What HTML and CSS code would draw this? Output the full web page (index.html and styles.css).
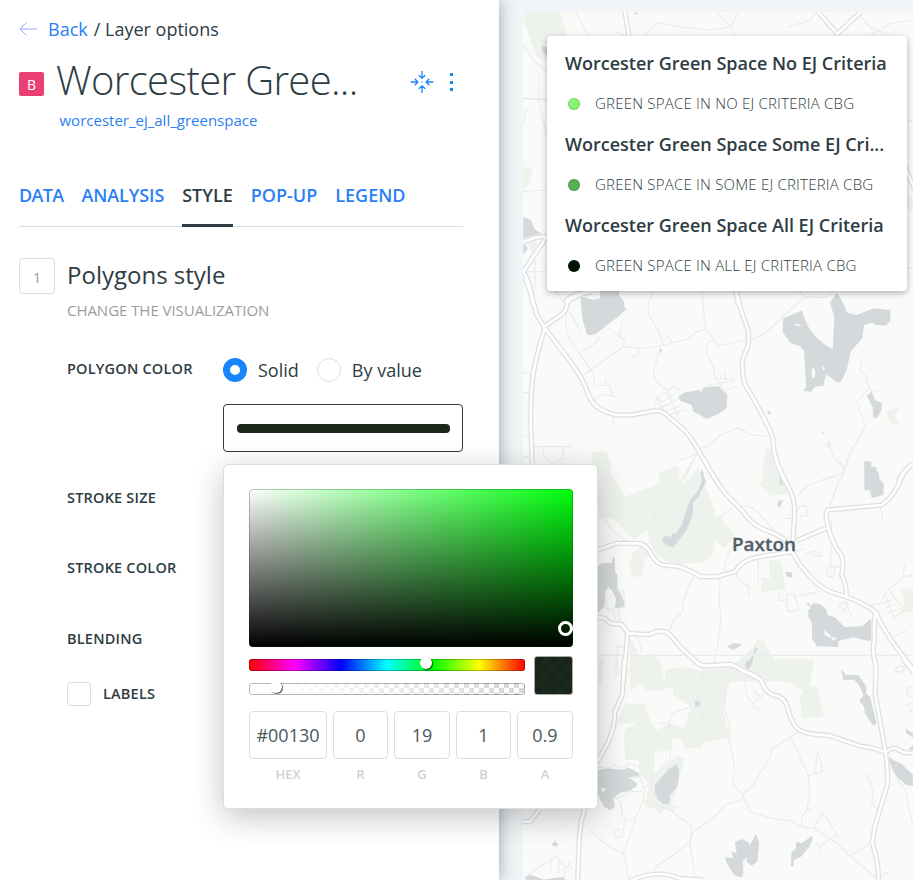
FILE: index.html
```html
<!DOCTYPE html>
<html lang="en">
<head>
<meta charset="utf-8">
<title>Layer options</title>
<link rel="stylesheet" href="styles.css">
</head>
<body>
<div class="app">
  <aside class="panel">
    <div class="crumbs">
      <svg class="back-icon" width="18" height="14" viewBox="0 0 18 14"><path d="M7.5 0.5 L1 7 L7.5 13.5 M1 7 H18"/></svg>
      <a class="link">Back</a><span class="crumb-rest">/ Layer options</span>
    </div>
    <header class="title-row">
      <span class="layer-letter">B</span>
      <h1 class="title">Worcester Gree...</h1>
      <svg class="center-icon" width="24" height="24" viewBox="0 0 24 24">
        <path d="M12 1v7M8.8 5.2L12 8.2l3.200-3M12 23v-7M8.800 18.800L12 15.800l3.200 3M.7 12h7M4.800 8.800L7.800 12l-3 3.200M23.300 12h-7M19.200 8.800L16.200 12l3 3.200"/><rect x="11.400" y="11.400" width="1.200" height="1.200"/>
      </svg>
      <span class="dots"><i></i><i></i><i></i></span>
    </header>
    <a class="source link">worcester_ej_all_greenspace</a>
    <nav class="tabs">
      <a class="tab-data">DATA</a><a class="tab-analysis">ANALYSIS</a><a class="active">STYLE</a><a>POP-UP</a><a>LEGEND</a>
    </nav>
    <section class="section">
      <span class="step">1</span>
      <div class="section-head">
        <h2>Polygons style</h2>
        <p>CHANGE THE VISUALIZATION</p>
      </div>
    </section>
    <div class="form">
      <div class="row row-color">
        <span class="label">POLYGON COLOR</span>
        <div class="control">
          <div class="radios">
            <span class="radio on"></span><span class="radio-text first">Solid</span>
            <span class="radio"></span><span class="radio-text">By value</span>
          </div>
          <div class="color-field">
            <div class="color-bar"></div>
            <div class="picker">
              <div class="shade"><span class="ring"></span></div>
              <div class="sliders">
                <div class="bars">
                  <div class="bar hue"><span class="knob hue-knob"></span></div>
                  <div class="bar alpha"><span class="knob alpha-knob"></span></div>
                </div>
                <div class="swatch"></div>
              </div>
              <div class="values">
                <div><span class="value">#00130</span><small>HEX</small></div>
                <div><span class="value">0</span><small>R</small></div>
                <div><span class="value">19</span><small>G</small></div>
                <div><span class="value">1</span><small>B</small></div>
                <div><span class="value">0.9</span><small>A</small></div>
              </div>
            </div>
          </div>
        </div>
      </div>
      <div class="row row-size"><span class="label">STROKE SIZE</span></div>
      <div class="row row-stroke"><span class="label">STROKE COLOR</span></div>
      <div class="row row-blend"><span class="label">BLENDING</span></div>
      <div class="row row-labels"><span class="check"></span><span class="label">LABELS</span></div>
    </div>
  </aside>
  <main class="stage">
    <div class="map">
      <svg class="map-art" width="390" height="868" viewBox="523 12 390 868">
        <defs>
          <g id="roads" fill="none" stroke-linejoin="round">
            <g transform="translate(500 0) scale(.33333)">
              <path d="M375 36L388 115M955 36L1012 102L1082 36M1012 102V180M140 710L70 815M70 725L110 712L140 710M70 815Q94 850 98 915M200 910Q220 885 275 876M706 870L715 915M1215 500L1245 570"/>
            </g>
            <g transform="translate(500 280) scale(.33333)">
              <path d="M75-5Q95 40 110 105L135 145L215 250Q250 300 260 330Q270 362 290 380Q320 400 350 405H395L460 393Q485 390 500 405L555 452Q585 490 600 520L655 612"/>
              <path d="M135 145Q115 200 100 280Q91 340 92 430L97 555M135 138L190 100Q205 80 198 65Q205 45 275 33"/>
              <path d="M706 25Q715 55 722 85Q730 115 743 145Q749 175 742 205Q722 240 728 270Q728 305 745 330Q770 370 795 422Q820 465 820 490Q820 530 850 595L860 612M1195 605Q1212 565 1245 548"/>
            </g>
            <g transform="translate(590 460) scale(.33333)">
              <path d="M340-5Q370 55 410 105L455 150Q485 195 530 212Q590 230 604 270Q622 310 670 360Q700 390 735 400Q820 425 858 458Q885 525 972 630"/>
              <path d="M555-5Q580 50 595 80Q615 115 614 165L608 245M620 242L715 202L708 170L712 150L875 135Q905 115 925 75Q940 30 970 10M715 202Q725 245 750 280Q765 300 755 345Q770 375 769 408"/>
              <path d="M20 270L80 250H140Q170 250 185 285Q200 312 220 315L270 320Q310 335 330 350H380L435 335Q455 300 500 292L605 275M20 470L45 475L60 490L95 493L115 520L175 524Q225 500 245 530L270 560L325 612L345 618L415 613Q440 617 455 630L515 660M113 520L100 665M857 458Q850 490 853 540Q844 570 858 620V665"/>
            </g>
            <g transform="translate(590 660) scale(.33333)">
              <path d="M310-3Q325 15 345 17L425 14Q445 20 460 33Q510 45 520 75Q530 100 555 106Q585 110 593 145Q605 190 625 208Q645 220 675 223L720 227L810 258Q850 262 888 278Q900 264 915 264L940 277L972 280M103-3L97 105L75 155Q75 200 55 245L20 310M855-3Q860 40 855 100L887 278Q895 350 892 375L865 465Q850 510 847 550Q865 600 866 665M118 664Q165 642 205 642Q240 642 265 655L340 660M940-3L972 38"/>
            </g>
            <g transform="translate(490 780) scale(.33333)"><path d="M98 125H120L150 87M282 87Q283 98 274 120L268 175L263 300"/></g>
          </g>
        </defs>
        <rect class="land" x="523" y="12" width="390" height="868"/>
        <g class="park">
          <path transform="translate(500 0) scale(.33333)" d="M75 36H180L203 110H150V185L112 175L70 60ZM70 500L98 505L85 555L70 572ZM85 725L105 715L115 745L95 770ZM1220 590H1245V640L1220 625Z"/>
          <path transform="translate(500 280) scale(.33333)" d="M275 515L320 513L332 555L328 615H275ZM475 578L528 558L545 612H485ZM800 497L820 505V560L835 600H787L790 545ZM1160 395L1193 380L1197 392L1183 405L1198 438L1172 428Z"/>
          <path transform="translate(590 460) scale(.33333)" d="M20 0L60 15L65 45L105 110L210 70L208 40L265 20L272 80L260 98L180 165L185 202L133 240L70 175L20 170ZM185 155Q260 110 325 20L345 75L375 155Q370 180 385 165L438 230L400 265L378 240L365 285L335 308L255 312L200 290L175 230L180 190ZM528 0H555L595 75V103L542 108L503 65L538 55L515 15ZM130 275L170 250L182 280L162 305L155 355L125 345L118 310ZM538 300L572 305L588 388L515 395V350L540 355ZM935 390L972 380V453L925 463L945 430ZM120 543L132 545L145 590L195 578L215 665H120ZM225 630L275 622L285 640L305 637V665H228ZM370 625L425 620L490 560L500 540L520 543L550 590L565 610L672 603L655 665H370ZM20 592L42 595L35 665H20Z"/>
          <path transform="translate(590 660) scale(.33333)" d="M122-2L210-2L223 60L290 20L340 35L365 15L425 20L400 150L418 235L335 248V262L283 268L275 238L242 230V272L193 275V345L225 320L262 288L285 295L245 435L268 440L250 453L220 448L210 465L195 445L165 442L178 370L150 345L145 300H106L103 235L105 210L138 190H80L105 130L165 132L175 170L200 210L240 190L280 205L305 140L250 105L250 78L220 90L175 95L150 70L122 95ZM495-2H672L660 80L682 80L702 170L635 175L630 110L640 90L610 80L595 50L570 35L535 45L510 20ZM20-2H38L33 75L20 80ZM950 155L970 140V158Z"/>
        </g>
        <g class="water">
          <path transform="translate(500 0) scale(.33333)" d="M123 138L143 142V170L130 160ZM70 650L92 660L105 690L125 700L112 715L70 720ZM70 730L84 745L75 760L70 762ZM404 38H414V43H405Z"/>
          <path transform="translate(500 280) scale(.33333)" d="M240 45Q275 65 300 55V30H357V45L372 65L373 80L379 87L355 110L330 128L290 160Q270 170 260 162L248 120ZM534 350L552 338L595 330L602 336L615 322L655 318L682 345L680 385L655 402L620 417L600 405L580 395L575 375L540 362ZM850 115L905 92L922 135Q945 180 998 208L1003 110L990 68L1010 38L1025 60L1042 98L1070 105L1120 85L1170 90L1172 120L1158 137L1130 135L1115 128L1092 135L1087 175L1052 215L1040 270L1022 307H1010L978 282L970 317L945 320L933 335L910 333L918 318L912 212L898 198L870 188L848 155ZM1100 348L1115 334L1125 360L1145 368V390L1132 413H1120L1118 380ZM1093 543L1113 545L1112 560L1128 562L1140 602H1095ZM804 392L813 396L811 404L802 401ZM602 575L608 568L614 602H607ZM965 457H972L970 463ZM478 204L486 208L482 221L477 212Z"/>
          <path transform="translate(590 460) scale(.33333)" d="M335 30L348 65L325 110L308 130L310 160L290 210L260 250L250 263L225 255L215 240L222 228L245 230V220L258 220L275 195L300 120L325 90L335 65ZM823 5H843L845 28L867 38L865 55L882 72L880 105L845 115L840 92L823 90ZM565 122L579 120L570 142L561 139ZM20 322L35 310L65 308L70 288L75 300V335L82 345L83 385L103 425V443L75 445L78 415L65 390L55 380L46 395L43 440L20 463ZM588 335L605 337L608 352L596 352L588 345ZM648 428L660 430L658 440L670 430L690 432L710 450L712 465L735 472L765 502L785 500L818 498L840 478L850 495V540L835 543L790 532L755 540L745 545V562L680 558L666 535V490L655 470V450L663 445ZM410 560L430 550L458 552L430 570ZM495 560L504 568L490 585L488 605L470 628L465 625L478 605L490 580ZM755 628L770 650L800 648L812 658L760 660ZM568 52L576 56V75L570 76Z"/>
          <path transform="translate(590 660) scale(.33333)" d="M20 330L55 325L100 330L113 322L148 340V347L115 352L140 370V378L120 392L90 398L70 415L75 440L60 450L42 440L20 395ZM262 312L268 335L263 380L240 405L238 433L220 432L205 420L195 400V375L235 328ZM498 522L508 548L502 605L485 617L470 605V592L458 605L460 638L455 653L432 645L408 605L405 592L430 595L425 575L440 580L435 545L455 537L475 545L480 555ZM605 575L618 568V545L635 550L665 528L668 535L660 557L633 590L612 600L610 620L602 618ZM753 27L765 45H805L830 80L828 100L840 110L860 190L850 197L825 162L822 140L808 122L820 105L805 72L790 58L762 57ZM470 3L490-3L483 18L477 28L465 15ZM315 124L330 121L333 138L315 140ZM892 285L912 302L935 312L970 345V378L950 375L920 350L900 310ZM945 205L970 220V235L950 220ZM955 268L970 255V272Z"/>
          <path transform="translate(490 780) scale(.33333)" d="M194 178L199 188L204 192V197L189 199L185 190H193ZM108 300L105 291L115 284L135 289L160 299L220 290L226 300Z"/>
        </g>
        <g class="land">
          <path transform="translate(500 280) scale(.33333)" d="M883 130L908 137L890 139ZM936 265Q948 260 945 290Q938 303 935 285ZM966 258L975 265L970 273Z"/>
          <path transform="translate(590 460) scale(.33333)" d="M700 510L722 525L722 535L705 525ZM722 532L740 533L730 543Z"/>
          <circle cx="603.300" cy="789.700" r="2"/>
        </g>
        <g class="minor">
          <path transform="translate(500 0) scale(.33333)" d="M228 36L265 110M385 115L350 95M430 110L470 68L550 82L625 90L670 85L692 80L715 36M692 80L705 110M650 36L692 80M865 80L930 62L950 36M1080 50L1115 85L1170 105M1110 105L1170 72L1235 60M70 135L100 180L140 215M120 215Q105 280 140 405M70 575L140 570M70 815H140M105 715V870M1220 805H1240M70 370L80 325"/>
          <path transform="translate(500 280) scale(.33333)" d="M165 30L198 80V145L210 180L280 280L284 318L330 315L335 345M198 95H208L240 152M240 215L270 200L295 182V168M250 285L370 200L374 180L358 165L367 128M325 145L374 182M370 200Q440 210 490 195L565 177Q590 150 617 147L655 197L740 180L780 170L840 120L860 98L915 50L975 53L1000 35M460 35Q435 80 450 110Q480 155 490 195M605 35L612 105L617 145M640 180Q605 195 625 235Q645 255 640 280L670 330M480 200L460 280Q465 310 500 328L538 420M418 205L412 225L390 237M462 382L470 355L520 320L535 325L537 360M470 375L520 345M480 385L530 360M495 395L545 375M505 405L558 387M465 360H485M470 345L490 388M595 330L630 315L710 300M655 297H705M675 330L715 318M660 285L664 298M672 272L678 298M690 280L694 300M282 360L310 342L348 350M315 298L318 315M340 410V438M70 280L100 277M70 338H90M70 468H95M103 500H215M130 500Q125 530 155 550L190 535V502M70 530H95M605 502H620L645 480Q660 465 685 455L715 443L755 465L805 468M535 542L590 523L550 602M1085 240L1080 270L1100 292L1107 325L1070 365L1097 440L1048 522L1025 602M1107 328L1133 336M985 485L993 492L985 502Q975 490 985 485L1000 530L1033 568M960 602L1030 580M895 30L915 50M500 165L518 188"/>
          <path transform="translate(590 460) scale(.33333)" d="M310 0L275 60V100L205 150Q175 175 178 220L180 245L160 255M215 240L270 310M245 285L340 235Q375 210 378 180L430 142Q475 125 510 165L565 225M625 105L655 75L755 42L715 150M745 0L765 20L755 42M870 140L880 188M610 175H585M620 155L630 140L648 137L653 165L630 170M430 260Q400 290 405 335M438 335Q440 370 475 375L478 410M505 292V370M390 350L388 430L393 470L385 550Q375 580 373 610M310 350L280 420L278 455L250 480L240 510M565 395L570 422L595 418M590 405L610 400L628 450L595 455L588 410L595 405M610 410L690 395M712 318V350H730L735 320H715M735 315L750 322M670 275Q695 275 690 290L670 285V272L645 285M615 275L645 265M745 435L770 425L765 455L745 435M768 425L785 472M820 440L870 430L885 400L940 350L970 345M885 405L915 480M900 395L935 440M875 430L910 418M885 445L920 430M895 458L930 445M910 470L935 460M905 535L948 512M20 170L40 175L75 220L110 243M80 395L100 390L105 440L85 445L90 490M50 400L48 445L70 450L75 490M100 560H82V635H120M135 525L150 550L155 580M20 586H972M345 615L330 665M915 630Q930 610 945 625Q935 645 915 630M0 50L40 160M945 315L940 345M725 180L722 330"/>
          <path transform="translate(590 660) scale(.33333)" d="M345 25L310 110Q310 130 300 142L245 160Q238 165 237 225L245 240L240 300L180 360L165 385L160 420L135 480H110L95 465Q95 410 75 415M320 100L343 180L340 193L290 200L247 225M205 190H237M425 20L405 115V150L418 190V240L435 325L427 370L457 405L480 455L545 475L600 482L635 500L672 505L735 545L780 588L860 655M457 405L495 370L510 340L542 290V270L600 230L625 217M600 230L655 345L660 400L650 450L635 470V500M655 348L695 335V315L683 275L675 340M455 420L405 435L370 475L310 515L300 545L250 585L195 620V640M160 420L240 450L300 495L305 515L300 550L315 650M0 510L55 560L100 580L137 480M100 580L118 660M105 480L95 530L75 532Q65 510 90 508M20 320L50 325L75 315L95 325L118 310L150 322M115 355L150 350L160 385M70 420L120 395H160M180 370L200 340M468 50Q460 115 490 130L525 100M490 90L510 110M490 135L510 152M672 505L700 450M690 460L710 470L748 540M690 570L695 555L738 525M675 550L690 555M780 588L845 550M828 340L850 390L845 430L865 455M900 320L945 390L970 500M915 30Q930 10 945 25Q930 45 915 30M970 80L950 85L955 110L970 115M950 140L970 125M78 0V45H95M650 445Q665 445 660 455M875 645L900 635M370 0V15"/>
          <path transform="translate(490 780) scale(.33333)" d="M108 290L180 240L200 230L220 255L250 265M205 235L208 280M185 240L180 280M240 240L235 260L220 265L226 290M0 90"/>
        </g>
        <use href="#roads" class="road-halo"/>
        <use href="#roads" class="road-edge"/>
        <use href="#roads" class="road-core"/>
        <path class="stream" d="M523 98.500L547 99.500M907 121H913"/>
        <text class="town" x="732" y="551" textLength="64" lengthAdjust="spacingAndGlyphs">Paxton</text>
      </svg>
      <div class="legend">
        <h3>Worcester Green Space No EJ Criteria</h3>
        <p><i class="dot light"></i>GREEN SPACE IN NO EJ CRITERIA CBG</p>
        <h3>Worcester Green Space Some EJ Cri...</h3>
        <p><i class="dot mid"></i>GREEN SPACE IN SOME EJ CRITERIA CBG</p>
        <h3>Worcester Green Space All EJ Criteria</h3>
        <p><i class="dot dark"></i>GREEN SPACE IN ALL EJ CRITERIA CBG</p>
      </div>
    </div>
  </main>
</div>
</body>
</html>
```
FILE: styles.css
```css
* { box-sizing: border-box; }
body {
  margin: 0;
  overflow: hidden;
  font-family: "Open Sans", sans-serif;
  color: #2e3c43;
}
h1, h2, h3, p { margin: 0; font-weight: 400; white-space: nowrap; }
.app { display: flex; width: 913px; height: 880px; }
.link { color: #2b7ff5; }

/* Editor panel */
.panel {
  position: relative;
  z-index: 2;
  flex: none;
  width: 499px;
  padding: 0 36px 0 19px;
  background: #fff;
  box-shadow: 0 0 16px rgba(0, 0, 0, .34);
}
.crumbs { display: flex; align-items: center; height: 58px; font-size: 18px; white-space: nowrap; }
.back-icon { margin-right: 11px; fill: none; stroke: #8fa8ff; stroke-width: 1; }
.crumb-rest { margin-left: 6px; }
.title-row { display: flex; align-items: center; height: 48px; }
.layer-letter {
  display: flex;
  align-items: center;
  justify-content: center;
  width: 25px;
  height: 24px;
  margin: 4px 12px 0 0;
  border-radius: 2px;
  background: #ea3f74;
  color: #fff;
  font-size: 14px;
}
.title { width: 354px; font-size: 40px; line-height: 48px; font-weight: 300; letter-spacing: -.65px; margin-top: -4px; }
.center-icon { flex: none; fill: #1785fb; margin-right: 16px; }
.center-icon path { fill: none; stroke: #1785fb; stroke-width: 1.300; }
.dots { display: flex; flex-direction: column; gap: 4.500px; }
.dots i { width: 3px; height: 3px; background: #1785fb; }
.source { display: block; height: 30px; margin-left: 40.500px; font-size: 15px; line-height: 29px; }
.tabs {
  display: flex;
  gap: 18px;
  height: 63px;
  margin-top: 28px;
  border-bottom: 1px solid #ddd;
  font-size: 18px;
  font-weight: 600;
  line-height: 62px;
  color: #2b7ff5;
  white-space: nowrap;
}
.tab-data { letter-spacing: -.7px; }
.tab-analysis { letter-spacing: -.1px; }
.tabs .active { height: 63px; border-bottom: 3px solid #2e3c43; color: #2e3c43; }
.section { display: flex; margin-top: 31px; }
.step {
  width: 36px;
  height: 36px;
  margin-right: 12px;
  border: 1px solid #ddd;
  border-radius: 4px;
  font-size: 15px;
  line-height: 36px;
  text-align: center;
  color: #979ea1;
}
.section-head h2 { font-size: 24px; line-height: 34px; }
.section-head p { margin-top: 8px; font-size: 15px; line-height: 20px; letter-spacing: -.04px; color: #979ea1; }

.form { margin: 38px 0 0 48px; }
.row { display: flex; align-items: center; }
.row-color { align-items: flex-start; }
.label { font-size: 14.500px; font-weight: 600; line-height: 20px; letter-spacing: .2px; width: 156px; white-space: nowrap; }
.row-color .label { margin-top: 1px; }
.radios { display: flex; align-items: center; height: 24px; font-size: 18px; white-space: nowrap; }
.radio { flex: none; width: 24px; height: 24px; border: 1px solid #ddd; border-radius: 50%; background: #fff; margin-right: 11px; }
.radio.on { border: 7.500px solid #1785fb; }
.radio-text.first { margin-right: 18px; }
.color-field {
  position: relative;
  display: flex;
  align-items: center;
  width: 240px;
  height: 48px;
  margin-top: 22px;
  padding: 0 12px 0 13px;
  border: 1px solid #2e3c43;
  border-radius: 4px;
}
.color-bar { width: 213px; height: 9px; border-radius: 4px; background: #1a291b; }
.row-size { margin-top: 36px; }
.row-stroke { margin-top: 50px; }
.row-blend { margin-top: 51px; }
.row-labels { margin-top: 33px; }
.row-labels .label { margin-top: -1px; }
.check { width: 24px; height: 24px; margin-right: 12px; border: 1px solid #ddd; border-radius: 3px; }

/* Colour picker popover */
.picker {
  position: absolute;
  top: 59px;
  left: -1px;
  width: 375px;
  height: 345px;
  padding: 24px 24px 0 25px;
  border: 1px solid #ddd;
  border-radius: 5px;
  background: #fff;
  box-shadow: 0 8px 32px rgba(0, 0, 0, .24);
}
.shade {
  position: relative;
  width: 324px;
  height: 158px;
  border-radius: 4px;
  background: linear-gradient(to top, #000, transparent), linear-gradient(to right, #fff, #00ff0d);
  box-shadow: inset 0 0 0 1px rgba(0, 60, 8, .28);
}
.ring {
  position: absolute;
  left: 309px;
  top: 132px;
  width: 15px;
  height: 15px;
  border: 3px solid #fff;
  border-radius: 50%;
}
.sliders { display: flex; justify-content: space-between; height: 39px; margin-top: 9px; }
.bars { padding-top: 3px; width: 276px; }
.bar { position: relative; height: 12px; border-radius: 3px; box-shadow: inset 0 0 0 1px rgba(0, 0, 0, .28); }
.hue { background: linear-gradient(to right, #f00, #f0f 16.670%, #00f 33.330%, #0ff 50%, #0f0 66.670%, #ff0 83.330%, #f00); }
.alpha {
  margin-top: 12px;
  background:
    linear-gradient(to right, #fff 10%, rgba(255, 255, 255, 0)),
    repeating-conic-gradient(#d6d6d6 0 25%, #fff 0 50%) 0 0 / 10px 10px;
}
.knob {
  position: absolute;
  width: 12px;
  height: 12px;
  border-radius: 50%;
  background: #fff;
  box-shadow: 1px 1px 1px rgba(0, 0, 0, .65);
}
.hue-knob { left: 171px; top: -2px; }
.alpha-knob { left: 21px; top: -2px; }
.swatch { width: 39px; border: 1px solid #aaa; border-radius: 3px; background: repeating-conic-gradient(#1a291b 0 25%, #17251a 0 50%) 0 0 / 15px 15px; }
.values { display: grid; grid-template-columns: 78px 55px 56px 55px 56px; gap: 6px; margin-top: 16px; text-align: center; }
.value {
  display: block;
  height: 48px;
  border: 1px solid #ddd;
  border-radius: 4px;
  font-size: 18px;
  line-height: 47px;
  color: #4b575d;
}
.values small { display: block; font-size: 13px; font-weight: 600; line-height: 31px; color: #ced1d4; }

/* Map */
.stage { flex: 1; padding: 12px 0 0 24px; background: #f1f5f8; }
.map { position: relative; width: 390px; height: 868px; border-radius: 4px 0 0; overflow: hidden; }
.map-art { display: block; }
.land { fill: #fafaf8; }
.park { fill: #eef2ed; }
.water { fill: #d4d9dc; }
.minor { fill: none; stroke: #ebebeb; stroke-width: 3.400; stroke-linejoin: round; }
.road-halo { stroke: #f0f0ef; stroke-width: 18; }
.road-edge { stroke: #dedede; stroke-width: 14; }
.road-core { stroke: #fff; stroke-width: 8; }
.stream { stroke: #dce1e5; stroke-width: 1; fill: none; }
.town { font: 600 17.500px "Open Sans", sans-serif; fill: #525f69; stroke: #525f69; stroke-width: .3; }
.legend {
  position: absolute;
  left: 24px;
  top: 24px;
  width: 360px;
  height: 255px;
  padding: 7px 18px;
  border-radius: 4px;
  background: #fff;
  box-shadow: 0 2px 6px rgba(0, 0, 0, .3);
}
.legend h3 { font-size: 18px; font-weight: 600; line-height: 40px; height: 41px; }
.legend p {
  display: flex;
  align-items: center;
  height: 40px;
  padding-bottom: 2px;
  font-size: 15px;
  font-weight: 300;
  line-height: 20px;
  letter-spacing: .21px;
}
.dot { width: 12px; height: 12px; margin: 2px 15px 0 3px; border-radius: 50%; border: 1px solid rgba(0, 0, 0, .15); }
.light { background: #87f572; }
.mid { background: #55b153; }
.dark { background: #001301; }
```
